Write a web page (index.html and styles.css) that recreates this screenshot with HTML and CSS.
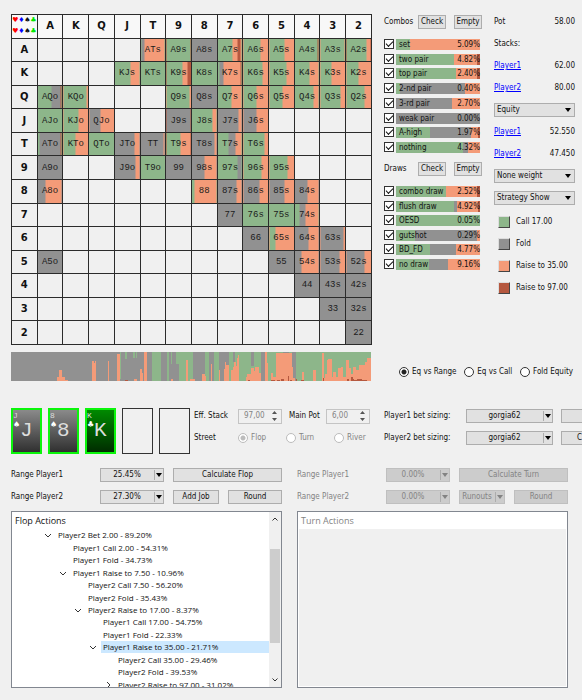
FILE: index.html
```
<!DOCTYPE html>
<html lang="en">

<head>
    <meta charset="UTF-8">
    <meta name="viewport" content="width=device-width, initial-scale=1.0">
    <title>Range Solver</title>
    <link rel="stylesheet" href="styles.css">
</head>

<body>
    <main class="app">
        <section class="top">
            <div class="board">
                <table class="range" id="range"></table>
            </div>

            <div class="filters">
                <div class="filter-head">
                    <span>Combos</span>
                    <button class="btn">Check</button>
                    <button class="btn">Empty</button>
                </div>
                <ul class="bars combos" id="combos"></ul>
                <div class="filter-head">
                    <span>Draws</span>
                    <button class="btn">Check</button>
                    <button class="btn">Empty</button>
                </div>
                <ul class="bars draws" id="draws"></ul>
            </div>

            <div class="side">
                <div class="line"><span>Pot</span><span>58.00</span></div>
                <div class="line"><span>Stacks:</span></div>
                <div class="line"><a href="#">Player1</a><span>62.00</span></div>
                <div class="line"><a href="#">Player2</a><span>80.00</span></div>
                <div class="drop"><select aria-label="Value"><option>Equity</option></select></div>
                <div class="line"><a href="#">Player1</a><span>52.550</span></div>
                <div class="line"><a href="#">Player2</a><span>47.450</span></div>
                <div class="drop"><select aria-label="Weight"><option>None weight</option></select></div>
                <div class="drop"><select aria-label="View"><option>Strategy Show</option></select></div>
                <ul class="legend">
                    <li><i class="swatch call"></i>Call 17.00</li>
                    <li><i class="swatch fold"></i>Fold</li>
                    <li><i class="swatch raise"></i>Raise to 35.00</li>
                    <li><i class="swatch raise-big"></i>Raise to 97.00</li>
                </ul>
            </div>
        </section>

        <section class="equity">
            <svg class="histogram" viewBox="33 21 1077 87" preserveAspectRatio="none" shape-rendering="crispEdges">
                <path class="h-fold" d="M33 21h1077v87H33z" />
                <path class="h-call" d="M358 21h3v80h-3z M375 21h6v20h-6z M399 21h4v19h-4z M407 21h4v19h-4z M456 21h26v87h-26z M499 21h8v87h-8z M512 21h4v36h-4z M528 21h50v87h-42V57h-8z M614 21h496v87H614z" />
                <path class="h-fold" d="M624 21h15v87h-15z M655 21h29v87h-29z M696 21h8v30h-8z M752 21h9v42h-9z M780 21h14v87h-14z M875 21h10v87h-10z M846 21h18v4h-18z" />
                <path class="h-raise" d="M171 108V97h6V75h10v20h8v10h9v3z M276 108V47h4v7h3v-6h5v60z M322 108V47h5v61z M351 108V27h7v81z M400 108v-6h11v6z M419 108V71h6v14h2v23z M431 108V21h10v87z M512 108v-5h6v5z M558 108V45h6v63z M568 108v-5h14v5z" />
                <path class="h-raise" d="M603 108V87h9v6h4v15z M630 108V57h3v51z M654 108V76h5v32z M671 108V72h3V50h3v10h7v48z M691 108V76h5V65h5V50h4v12h3V40h3V30h4v78z" />
                <path class="h-raise" d="M735 108V95h5v-9h10V69h10v10h3V65h13v19h4v24z M793 108V21h5v34h4v53z M811 108V84h5v11h10V24h47v42h3v32h8v10z M903 108V80h6v28z M936 108V76h10v32z" />
                <path class="h-raise" d="M963 108V23h6v75h4V88h5V45h4v-3h10v54h5V80h7v15h7V70h8v-4h6v30h9V45h9v23h8v20h4V66h11v9h9V60h16V50h6V38h13v70z" />
                <path class="h-big" d="M374 108v-3h8v3z M528 110v-3h9v3z M743 108v-3h6v3z M812 108v-4h10v4z M829 108v-4h8v4z M842 108v-6h9v6z M861 108V93h3v15z M867 108v-4h8v4z M885 108v-5h3v5z M902 108v-3h8v3z M966 108V98h3v10z M1038 108v-6h5v6z M1051 108V95h5v7h4v3h8v-3h16v3h13v3z" />
            </svg>
            <div class="modes">
                <label><input type="radio" name="mode" checked>Eq vs Range</label>
                <label><input type="radio" name="mode">Eq vs Call</label>
                <label><input type="radio" name="mode">Fold Equity</label>
            </div>
        </section>

        <section class="setup">
            <div class="cards">
                <div class="card grey"><b>J</b><i>&#9824;</i><strong>J</strong></div>
                <div class="card grey"><b>8</b><i>&#9824;</i><strong>8</strong></div>
                <div class="card green"><b>K</b><i>&#9827;</i><strong>K</strong></div>
                <div class="card"></div>
                <div class="card"></div>
            </div>
            <div class="pot">
                <div class="row">
                    <label class="cap" for="stack">Eff. Stack</label>
                    <span class="spin"><input id="stack" type="text" value="97,00" disabled>
                        <svg viewBox="0 0 7 12"><path d="M1 4L3.5 1L6 4zM1 8L3.5 11L6 8z" /></svg></span>
                    <label class="cap main-pot" for="pot">Main Pot</label>
                    <span class="spin"><input id="pot" type="text" value="6,00" disabled>
                        <svg viewBox="0 0 7 12"><path d="M1 4L3.5 1L6 4zM1 8L3.5 11L6 8z" /></svg></span>
                </div>
                <div class="row">
                    <span class="cap">Street</span>
                    <label class="off"><input type="radio" name="street" checked disabled>Flop</label>
                    <label class="off"><input type="radio" name="street" disabled>Turn</label>
                    <label class="off"><input type="radio" name="street" disabled>River</label>
                </div>
            </div>
            <div class="sizing">
                <div class="row">
                    <label class="size-cap" for="size1">Player1 bet sizing:</label>
                    <div class="drop split"><select id="size1"><option>gorgia62</option></select></div>
                    <button class="btn more" aria-label="Edit"></button>
                </div>
                <div class="row">
                    <label class="size-cap" for="size2">Player2 bet sizing:</label>
                    <div class="drop split"><select id="size2"><option>gorgia62</option></select></div>
                    <button class="btn more">C</button>
                </div>
            </div>
        </section>

        <section class="streets">
            <div class="street">
                <div class="controls">
                    <label for="f1">Range Player1</label>
                    <div class="drop split"><select id="f1"><option>25.45%</option></select></div>
                    <button class="btn wide">Calculate Flop</button>
                    <label for="f2">Range Player2</label>
                    <div class="drop split"><select id="f2"><option>27.30%</option></select></div>
                    <button class="btn">Add Job</button>
                    <button class="btn">Round</button>
                </div>
                <div class="panel">
                    <div class="panel-main">
                        <h2>Flop Actions</h2>
                        <ul class="tree" id="tree"></ul>
                    </div>
                    <div class="scroll">
                        <svg viewBox="0 0 10 10"><path d="M2.5 6.5L5 4L7.5 6.5" /></svg>
                        <div class="thumb"></div>
                        <svg viewBox="0 0 10 10"><path d="M2.5 3.5L5 6L7.5 3.5" /></svg>
                    </div>
                </div>
            </div>

            <div class="street disabled">
                <div class="controls">
                    <label for="t1">Range Player1</label>
                    <div class="drop split"><select id="t1" disabled><option>0.00%</option></select></div>
                    <button class="btn wide" disabled>Calculate Turn</button>
                    <label for="t2">Range Player2</label>
                    <div class="drop split"><select id="t2" disabled><option>0.00%</option></select></div>
                    <div class="drop split"><select aria-label="Runouts" disabled><option>Runouts</option></select></div>
                    <button class="btn" disabled>Round</button>
                </div>
                <div class="panel">
                    <div class="panel-main">
                        <h2>Turn Actions</h2>
                        <div class="blank"></div>
                    </div>
                </div>
            </div>
        </section>
    </main>

    <script>
        const ranks = ['A', 'K', 'Q', 'J', 'T', '9', '8', '7', '6', '5', '4', '3', '2'];
        const colors = { g: '#8db68a', f: '#919191', r: '#f49b78', b: '#b5583f' };

        // g = call, f = fold, r = raise to 35, b = raise to 97
        const hands = {
            ATs: 'g4 f11 r85', A9s: 'g96 b4', A8s: 'f100', A7s: 'g61 r22 b14 r3', A6s: 'g68 r32', A5s: 'g62 r38',
            A4s: 'g95 b5', A3s: 'g95 r5', A2s: 'g80 r17 b3',
            KJs: 'g63 r37', KTs: 'g100', K9s: 'g63 r20 b17', K8s: 'g100', K7s: 'g10 f14 r70 b6', K6s: 'g75 r25',
            K5s: 'g68 r32', K4s: 'g62 r38', K3s: 'g45 r55', K2s: 'g48 r52',
            AQo: 'g58 f38 b4', KQo: 'g94 r6', Q9s: 'g93 r7', Q8s: 'f100', Q7s: 'g58 r42', Q6s: 'g53 r47',
            Q5s: 'g52 r48', Q4s: 'g78 r22', Q3s: 'g79 r21', Q2s: 'g73 r27',
            AJo: 'g100', KJo: 'g60 r40', QJo: 'f45 r55', J9s: 'f95 b5', J8s: 'g83 r17', J7s: 'f87 r13', J6s: 'f51 r49',
            ATo: 'g8 f88 b4', KTo: 'g47 r53', QTo: 'g100', JTo: 'f82 r18', TT: 'f96 r4', T9s: 'g57 r38 b5',
            T8s: 'f93 r7', T7s: 'g46 f29 r25', T6s: 'g83 r17',
            A9o: 'f100', J9o: 'f84 r16', T9o: 'g100', '99': 'f100', '98s': 'f53 r47', '97s': 'g84 f16',
            '96s': 'g72 r28', '95s': 'g73 r27',
            A8o: 'f34 r66', '88': 'g13 r87', '87s': 'f80 r20', '86s': 'f64 r36', '85s': 'f62 r38', '84s': 'f54 r46',
            '77': 'f100', '76s': 'g100', '75s': 'g100', '74s': 'g20 f27 r53',
            '66': 'f100', '65s': 'g26 r74', '64s': 'f60 r40', '63s': 'f94 r6',
            A5o: 'f100', '55': 'f100', '54s': 'f31 r69', '53s': 'f76 r24', '52s': 'f73 r27',
            '44': 'f100', '43s': 'f100', '42s': 'f100', '33': 'f100', '32s': 'f100', '22': 'f100'
        };

        const combos = [
            ['set', '5.09%', 'g17 r83'], ['two pair', '4.82%', 'g69 r27 b4'], ['top pair', '2.40%', 'g71 r26 b3'],
            ['2-nd pair', '0.40%', 'g5 f77 r18'], ['3-rd pair', '2.70%', 'f67 r33'], ['weak pair', '0.00%', 'f100'],
            ['A-high', '1.97%', 'g40 f49 r9 b2'], ['nothing', '4.32%', 'g80 f6 r14']
        ];
        const draws = [
            ['combo draw', '2.52%', 'g59 r37 b4'], ['flush draw', '4.92%', 'g69 f4 r25 b2'], ['OESD', '0.05%', 'g100'],
            ['gutshot', '0.29%', 'g23 f74 r3'], ['BD_FD', '4.77%', 'g40 f32 r28'], ['no draw', '9.16%', 'g39 f23 r38']
        ];

        // level, arrow, text
        const actions = [
            [0, 'open', 'Player2 Bet 2.00 - 89.20%'], [1, '', 'Player1 Call 2.00 - 54.31%'],
            [1, '', 'Player1 Fold - 34.73%'], [1, 'open', 'Player1 Raise to 7.50 - 10.96%'],
            [2, '', 'Player2 Call 7.50 - 56.20%'], [2, '', 'Player2 Fold - 35.43%'],
            [2, 'open', 'Player2 Raise to 17.00 - 8.37%'], [3, '', 'Player1 Call 17.00 - 54.75%'],
            [3, '', 'Player1 Fold - 22.33%'], [3, 'open', 'Player1 Raise to 35.00 - 21.71%'],
            [4, '', 'Player2 Call 35.00 - 29.46%'], [4, '', 'Player2 Fold - 39.53%'],
            [4, 'closed', 'Player2 Raise to 97.00 - 31.02%']
        ];
        const selected = 9;

        function stripes(mix) {
            let pos = 0;
            const stops = mix.split(' ').map((part) => {
                const start = pos;
                pos += Number(part.slice(1));
                return `${colors[part[0]]} ${start}% ${pos}%`;
            });
            return `background-image: linear-gradient(90deg, ${stops.join(', ')})`;
        }

        function handName(row, col) {
            if (row === col) return ranks[row] + ranks[col];
            return row < col ? ranks[row] + ranks[col] + 's' : ranks[col] + ranks[row] + 'o';
        }

        function drawRange() {
            const suits = '<span class="red">♥</span><span class="blue">♦</span><span>♠</span><span class="lime">♣</span>';
            let html = `<tr><th><div class="suits">${suits}${suits}</div></th>`;
            html += ranks.map((r) => `<th>${r}</th>`).join('') + '</tr>';
            ranks.forEach((r, row) => {
                html += `<tr><th>${r}</th>`;
                ranks.forEach((c, col) => {
                    const name = handName(row, col);
                    html += hands[name] ? `<td style="${stripes(hands[name])}">${name}</td>` : '<td></td>';
                });
                html += '</tr>';
            });
            document.getElementById('range').innerHTML = html;
        }

        function drawBars(id, list) {
            document.getElementById(id).innerHTML = list.map(([name, value, mix]) =>
                `<li><label><input type="checkbox" checked><span class="bar" style="${stripes(mix)}"><span>${name}</span><span>${value}</span></span></label></li>`
            ).join('');
        }

        function drawTree() {
            const arrows = { open: 'M1 3L4 6L7 3', closed: 'M3 1L6 4L3 7' };
            document.getElementById('tree').innerHTML = actions.map(([level, arrow, text], i) => {
                const icon = `<svg class="${arrow}" viewBox="0 0 8 8"><path d="${arrows[arrow] || ''}" /></svg>`;
                return `<li class="level${level}">${icon}<span class="${i === selected ? 'selected' : ''}">${text}</span></li>`;
            }).join('');
        }

        drawRange();
        drawBars('combos', combos);
        drawBars('draws', draws);
        drawTree();
    </script>
</body>

</html>
```
FILE: styles.css
```
* {
    box-sizing: border-box;
}

body {
    margin: 0;
    background-color: #f0f0f0;
    color: #111;
    font-family: "DejaVu Sans Condensed", "Open Sans", sans-serif;
    font-size: 8px;
    line-height: 12px;
    white-space: nowrap;
    overflow: hidden;
}

ul {
    list-style: none;
    margin: 0;
    padding: 0;
}

a {
    color: #0000ff;
}

input,
select,
button {
    margin: 0;
    font: inherit;
    color: inherit;
}

.app {
    padding: 11px 0 12px 11px;
    overflow: hidden;
}

/* buttons and drop-downs */
.btn {
    height: 14px;
    padding: 0;
    border: 1px solid #adadad;
    background-color: #e1e1e1;
    text-align: center;
    line-height: 12px;
}

.drop {
    position: relative;
    height: 14px;
}

.drop select {
    display: block;
    appearance: none;
    width: 100%;
    height: 14px;
    padding: 0 2px;
    border: 1px solid #adadad;
    border-radius: 0;
    background-color: #e1e1e1;
    line-height: 12px;
    opacity: 1;
}

.drop::after {
    content: "";
    position: absolute;
    right: 4px;
    top: 5px;
    border: 3px solid transparent;
    border-top: 4px solid #000;
    border-bottom: 0;
}

.split select {
    padding: 0 10px 0 0;
    text-align: center;
    text-align-last: center;
}

.split::before {
    content: "";
    position: absolute;
    right: 9px;
    top: 2px;
    bottom: 2px;
    border-left: 1px solid #adadad;
}

.split::after {
    right: 2px;
}

.disabled {
    color: #838383;
}

.disabled .btn,
.disabled .drop select {
    background-color: #cccccc;
    border-color: #bfbfbf;
}

.disabled .drop::after {
    border-top-color: #838383;
}

input[type="radio"],
input[type="checkbox"] {
    appearance: none;
    flex: none;
    width: 10px;
    height: 10px;
    border: 1px solid #333;
    background-color: #fff;
}

input[type="radio"] {
    border-radius: 50%;
}

input[type="radio"]:checked {
    background-image: radial-gradient(circle, #222 0 2px, transparent 3px);
}

input[type="radio"]:disabled {
    border-color: #bcbcbc;
}

input[type="radio"]:checked:disabled {
    background-image: radial-gradient(circle, #bcbcbc 0 2px, transparent 3px);
}

/* range grid */
.top {
    display: grid;
    grid-template-columns: 1fr 98px 81px;
    column-gap: 12px;
    padding-right: 7px;
}

.board {
    padding-top: 3px;
}

.range {
    width: 100%;
    height: 331px;
    table-layout: fixed;
    border-collapse: collapse;
}

.range tr {
    height: 23px;
}

.range th,
.range td {
    padding: 0;
    border: 1px solid #2b2b2b;
    text-align: center;
    vertical-align: middle;
}

.range th {
    font-family: "DejaVu Sans", sans-serif;
    font-size: 10px;
    font-weight: bold;
}

.range tr:first-child th {
    background-color: #f8f8f8;
}

.range td {
    font-family: "Liberation Mono", monospace;
    font-size: 9px;
    color: #1c1c1c;
}

.suits {
    display: grid;
    grid-template-columns: repeat(4, 6px);
    grid-auto-rows: 11px;
    justify-content: center;
    font-size: 7px;
    font-weight: normal;
    line-height: 11px;
}

.red {
    color: #ff0000;
}

.blue {
    color: #0000ff;
}

.lime {
    color: #00e600;
}

/* combos and draws */
.filter-head {
    display: grid;
    grid-template-columns: 1fr 28px 28px;
    column-gap: 8px;
    align-items: center;
    height: 22px;
}

.filter-head span {
    width: 26px;
}

.bars {
    display: grid;
    align-content: space-between;
    padding-right: 2px;
}

.combos {
    height: 114px;
    margin: 6px 0 5px;
}

.draws {
    height: 84px;
    margin-top: 6px;
}

.bars label {
    display: flex;
    gap: 2px;
}

.bars input {
    position: relative;
}

.bars input:checked::after {
    content: "";
    position: absolute;
    left: 1px;
    top: 1px;
    width: 6px;
    height: 3px;
    border-left: 1px solid #111;
    border-bottom: 1px solid #111;
    transform: rotate(-45deg);
}

.bar {
    flex: 1;
    display: flex;
    justify-content: space-between;
    height: 11px;
    padding-left: 3px;
    line-height: 11px;
}

/* pot, stacks, legend */
.side {
    display: grid;
    grid-auto-rows: 22px;
    align-content: start;
    align-items: center;
}

.line {
    display: flex;
    justify-content: space-between;
}

.legend {
    align-self: start;
    padding-top: 2px;
}

.legend li {
    display: flex;
    align-items: center;
    gap: 6px;
    height: 22px;
    padding-left: 4px;
}

.swatch {
    width: 12px;
    height: 12px;
    border: 1px solid #444;
    border-top-color: #ddd;
    border-left-color: #ddd;
}

.call {
    background-color: #8db68a;
}

.fold {
    background-color: #919191;
}

.raise {
    background-color: #f49b78;
}

.raise-big {
    background-color: #b5583f;
}

/* equity strip */
.equity {
    display: grid;
    grid-template-columns: 1fr 174px;
    column-gap: 28px;
    padding: 7px 9px 0 0;
}

.histogram {
    display: block;
    width: 100%;
    height: 29px;
}

.h-fold {
    fill: #919191;
}

.h-call {
    fill: #8db68a;
}

.h-raise {
    fill: #f49b78;
}

.h-big {
    fill: #b5583f;
}

.modes {
    display: flex;
    justify-content: space-between;
    align-items: center;
    padding-top: 11px;
}

.modes label,
.off {
    display: flex;
    align-items: center;
    gap: 3px;
}

/* cards and sizing */
.setup {
    display: flex;
    margin-top: 27px;
}

.cards {
    flex: none;
    display: flex;
    gap: 6px;
}

.card {
    display: grid;
    grid-template-columns: 7px 1fr;
    grid-template-rows: 9px 12px 1fr;
    width: 31px;
    height: 46px;
    border: 1px solid #333;
    color: #ddd;
    font-family: "Liberation Mono", monospace;
}

.card b {
    grid-column: 1 / 3;
    font-weight: normal;
}

.card i {
    font-family: "DejaVu Sans", sans-serif;
    font-style: normal;
    color: #fff;
}

.card strong {
    grid-row: 2 / 4;
    grid-column: 2;
    font-size: 21px;
    font-weight: normal;
    line-height: 24px;
}

.card.grey {
    border: 2px solid #0bf50b;
    background-image: linear-gradient(#8a8a8a, #303030);
}

.card.green {
    border: 2px solid #0bf50b;
    background-image: linear-gradient(#008a00, #002c00);
}

.row {
    display: flex;
    align-items: center;
    height: 22px;
}

.row > * {
    flex: none;
}

.pot {
    flex: none;
    width: 177px;
    margin-left: 4px;
    margin-top: -3px;
}

.pot .cap {
    width: 44px;
}

.pot .main-pot {
    width: 37px;
    margin-left: 7px;
}

.off {
    width: 48px;
    color: #838383;
}

.spin {
    display: flex;
    align-items: center;
    width: 44px;
    height: 15px;
    padding-right: 3px;
    border: 1px solid #c4c4c4;
    color: #838383;
}

.spin input {
    flex: 1;
    min-width: 0;
    height: 12px;
    padding: 0 0 0 5px;
    border: 0;
    background: none;
}

.spin svg {
    width: 7px;
    height: 12px;
    fill: #555;
}

.sizing {
    flex: none;
    margin-left: 13px;
    margin-top: -3px;
}

.size-cap {
    width: 82px;
}

.sizing .drop {
    width: 87px;
}

.more {
    width: 80px;
    margin-left: 8px;
    padding-left: 15px;
    text-align: left;
}

/* flop and turn */
.streets {
    display: grid;
    grid-template-columns: 1fr 1fr;
    column-gap: 15px;
    padding-right: 14px;
    margin-top: 10px;
}

.controls {
    display: grid;
    grid-template-columns: 80px 64px 46px 1fr;
    grid-auto-rows: 22px;
    column-gap: 9px;
    align-items: center;
}

.wide {
    grid-column: 3 / 5;
}

.panel {
    display: flex;
    height: 177px;
    margin-top: 3px;
    border: 1px solid #828790;
    background-color: #fff;
    font-family: "Open Sans", sans-serif;
    overflow: hidden;
}

.panel-main {
    flex: 1;
    display: flex;
    flex-direction: column;
}

.panel h2 {
    flex: none;
    margin: 0;
    height: 17px;
    padding-left: 3px;
    font-size: 9px;
    font-weight: normal;
    line-height: 18px;
}

.blank {
    flex: 1;
    margin: 0 1px 1px;
    background-color: #f0f0f0;
}

.tree {
    flex: none;
    display: grid;
    grid-auto-rows: 1fr;
    height: 162px;
}

.tree li {
    display: flex;
    align-items: center;
    gap: 4px;
}

.tree svg {
    flex: none;
    width: 8px;
    height: 8px;
    fill: none;
    stroke: #333;
}

.tree span {
    flex: 1;
    padding-left: 2px;
}

.tree .selected {
    background-color: #cce8ff;
}

.level0 {
    padding-left: 32px;
}

.level1 {
    padding-left: 47px;
}

.level2 {
    padding-left: 62px;
}

.level3 {
    padding-left: 77px;
}

.level4 {
    padding-left: 92px;
}

.scroll {
    display: flex;
    flex-direction: column;
    width: 12px;
    padding: 2px 1px;
    background-color: #f0f0f0;
}

.scroll svg {
    width: 10px;
    height: 10px;
    fill: none;
    stroke: #333;
}

.thumb {
    height: 94px;
    margin: 25px 0 auto;
    background-color: #cdcdcd;
}
```
